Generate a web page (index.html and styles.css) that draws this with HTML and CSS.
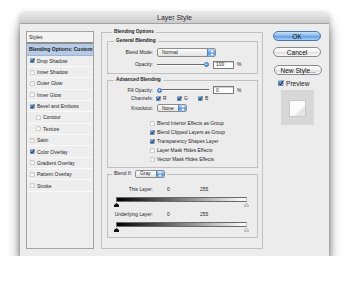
FILE: index.html
```html
<!DOCTYPE html>
<html>
<head>
<meta charset="utf-8">
<title>Layer Style</title>
<link rel="stylesheet" href="styles.css">
</head>
<body>
<div class="window">
  <div class="titlebar">Layer Style</div>
  <div class="content">
    <div class="styles">
      <div class="styles-head">Styles</div>
      <div class="row sel">Blending Options: Custom</div>
      <div class="row"><svg class="cb" viewBox="0 0 10 10"><rect x=".5" y="1.5" width="8" height="8" rx="1" fill="#6ea3e0" stroke="#335f95"/><path d="M2 5.5 4 8 9 1" fill="none" stroke="#111" stroke-width="1.6"/></svg><span>Drop Shadow</span></div>
      <div class="row"><svg class="cb" viewBox="0 0 10 10"><rect x=".5" y="1.5" width="8" height="8" rx="1" fill="#fff" stroke="#8c8c8c"/></svg><span>Inner Shadow</span></div>
      <div class="row"><svg class="cb" viewBox="0 0 10 10"><rect x=".5" y="1.5" width="8" height="8" rx="1" fill="#fff" stroke="#8c8c8c"/></svg><span>Outer Glow</span></div>
      <div class="row"><svg class="cb" viewBox="0 0 10 10"><rect x=".5" y="1.5" width="8" height="8" rx="1" fill="#fff" stroke="#8c8c8c"/></svg><span>Inner Glow</span></div>
      <div class="row"><svg class="cb" viewBox="0 0 10 10"><rect x=".5" y="1.5" width="8" height="8" rx="1" fill="#6ea3e0" stroke="#335f95"/><path d="M2 5.5 4 8 9 1" fill="none" stroke="#111" stroke-width="1.6"/></svg><span>Bevel and Emboss</span></div>
      <div class="row sub"><svg class="cb" viewBox="0 0 10 10"><rect x=".5" y="1.5" width="8" height="8" rx="1" fill="#fff" stroke="#8c8c8c"/></svg><span>Contour</span></div>
      <div class="row sub"><svg class="cb" viewBox="0 0 10 10"><rect x=".5" y="1.5" width="8" height="8" rx="1" fill="#fff" stroke="#8c8c8c"/></svg><span>Texture</span></div>
      <div class="row"><svg class="cb" viewBox="0 0 10 10"><rect x=".5" y="1.5" width="8" height="8" rx="1" fill="#fff" stroke="#8c8c8c"/></svg><span>Satin</span></div>
      <div class="row"><svg class="cb" viewBox="0 0 10 10"><rect x=".5" y="1.5" width="8" height="8" rx="1" fill="#6ea3e0" stroke="#335f95"/><path d="M2 5.5 4 8 9 1" fill="none" stroke="#111" stroke-width="1.6"/></svg><span>Color Overlay</span></div>
      <div class="row"><svg class="cb" viewBox="0 0 10 10"><rect x=".5" y="1.5" width="8" height="8" rx="1" fill="#fff" stroke="#8c8c8c"/></svg><span>Gradient Overlay</span></div>
      <div class="row"><svg class="cb" viewBox="0 0 10 10"><rect x=".5" y="1.5" width="8" height="8" rx="1" fill="#fff" stroke="#8c8c8c"/></svg><span>Pattern Overlay</span></div>
      <div class="row"><svg class="cb" viewBox="0 0 10 10"><rect x=".5" y="1.5" width="8" height="8" rx="1" fill="#fff" stroke="#8c8c8c"/></svg><span>Stroke</span></div>
    </div>

    <fieldset class="grp outer">
      <legend class="lg-outer">Blending Options</legend>

      <fieldset class="grp general">
        <legend class="lg-inner">General Blending</legend>
        <div class="frow">
          <span class="lbl">Blend Mode:</span>
          <div class="popup w-mode"><span class="ptxt">Normal</span><span class="cap"><svg viewBox="0 0 4 6"><path d="M2 0 3.6 2.2H.4Z M2 6 3.6 3.8H.4Z" fill="#fff"/></svg></span></div>
        </div>
        <div class="frow gap3">
          <span class="lbl">Opacity:</span>
          <div class="slider"><span class="track"></span><span class="knob"></span></div>
          <span class="num">100</span><span class="pct">%</span>
        </div>
      </fieldset>

      <fieldset class="grp adv">
        <legend class="lg-inner">Advanced Blending</legend>
        <div class="frow h8">
          <span class="lbl">Fill Opacity:</span>
          <div class="slider"><span class="knob"></span><span class="track"></span></div>
          <span class="num">0</span><span class="pct">%</span>
        </div>
        <div class="frow h8">
          <span class="lbl short">Channels:</span>
          <span class="ch"><svg class="cb" viewBox="0 0 10 10"><rect x=".5" y="1.5" width="8" height="8" rx="1" fill="#6ea3e0" stroke="#335f95"/><path d="M2 5.5 4 8 9 1" fill="none" stroke="#111" stroke-width="1.6"/></svg><span>R</span></span>
          <span class="ch"><svg class="cb" viewBox="0 0 10 10"><rect x=".5" y="1.5" width="8" height="8" rx="1" fill="#6ea3e0" stroke="#335f95"/><path d="M2 5.5 4 8 9 1" fill="none" stroke="#111" stroke-width="1.6"/></svg><span>G</span></span>
          <span class="ch"><svg class="cb" viewBox="0 0 10 10"><rect x=".5" y="1.5" width="8" height="8" rx="1" fill="#6ea3e0" stroke="#335f95"/><path d="M2 5.5 4 8 9 1" fill="none" stroke="#111" stroke-width="1.6"/></svg><span>B</span></span>
        </div>
        <div class="frow h8 mt2">
          <span class="lbl">Knockout:</span>
          <div class="popup w-none"><span class="ptxt">None</span><span class="cap"><svg viewBox="0 0 4 6"><path d="M2 0 3.6 2.2H.4Z M2 6 3.6 3.8H.4Z" fill="#fff"/></svg></span></div>
        </div>
        <div class="checks">
          <div class="chk"><svg class="cb" viewBox="0 0 10 10"><rect x=".5" y="1.5" width="8" height="8" rx="1" fill="#fff" stroke="#8c8c8c"/></svg><span>Blend Interior Effects as Group</span></div>
          <div class="chk"><svg class="cb" viewBox="0 0 10 10"><rect x=".5" y="1.5" width="8" height="8" rx="1" fill="#6ea3e0" stroke="#335f95"/><path d="M2 5.5 4 8 9 1" fill="none" stroke="#111" stroke-width="1.6"/></svg><span>Blend Clipped Layers as Group</span></div>
          <div class="chk"><svg class="cb" viewBox="0 0 10 10"><rect x=".5" y="1.5" width="8" height="8" rx="1" fill="#6ea3e0" stroke="#335f95"/><path d="M2 5.5 4 8 9 1" fill="none" stroke="#111" stroke-width="1.6"/></svg><span>Transparency Shapes Layer</span></div>
          <div class="chk"><svg class="cb" viewBox="0 0 10 10"><rect x=".5" y="1.5" width="8" height="8" rx="1" fill="#fff" stroke="#8c8c8c"/></svg><span>Layer Mask Hides Effects</span></div>
          <div class="chk"><svg class="cb" viewBox="0 0 10 10"><rect x=".5" y="1.5" width="8" height="8" rx="1" fill="#fff" stroke="#8c8c8c"/></svg><span>Vector Mask Hides Effects</span></div>
        </div>
      </fieldset>

      <fieldset class="grp blendif">
        <legend class="lg-bi"><span>Blend If:</span>
          <span class="popup w-gray"><span class="ptxt">Gray</span><span class="cap"><svg viewBox="0 0 4 6"><path d="M2 0 3.6 2.2H.4Z M2 6 3.6 3.8H.4Z" fill="#fff"/></svg></span></span>
        </legend>
        <div class="bi-row"><span class="lbl">This Layer:</span><span class="v0">0</span><span>255</span></div>
        <div class="bar"></div>
        <div class="marks">
          <svg viewBox="0 0 5 4"><path d="M2.5 0 5 2V4H0V2Z" fill="#111"/></svg>
          <svg viewBox="0 0 5 4"><path d="M2.5.4 4.6 2.1V3.6H.4V2.1Z" fill="#d6d6d6" stroke="#9a9a9a" stroke-width=".6"/></svg>
        </div>
        <div class="bi-row mt3"><span class="lbl">Underlying Layer:</span><span class="v0">0</span><span>255</span></div>
        <div class="bar"></div>
        <div class="marks">
          <svg viewBox="0 0 5 4"><path d="M2.5 0 5 2V4H0V2Z" fill="#111"/></svg>
          <svg viewBox="0 0 5 4"><path d="M2.5.4 4.6 2.1V3.6H.4V2.1Z" fill="#d6d6d6" stroke="#9a9a9a" stroke-width=".6"/></svg>
        </div>
      </fieldset>
    </fieldset>

    <div class="buttons">
      <div class="btn ok">OK</div>
      <div class="btn cancel">Cancel</div>
      <div class="btn newstyle">New Style...</div>
      <div class="prev"><svg class="cb big" viewBox="0 0 10 10"><rect x=".5" y="1.5" width="8" height="8" rx="1" fill="#6ea3e0" stroke="#335f95"/><path d="M2 5.5 4 8 9 1" fill="none" stroke="#111" stroke-width="1.6"/></svg><span>Preview</span></div>
      <div class="thumb">
        <svg viewBox="0 0 33 35" width="33" height="35">
          <rect width="33" height="35" fill="#d7d7d7"/>
          <rect x="8.5" y="10.5" width="16" height="16" fill="#e2e2e2" stroke="#c8c8c8"/>
          <path d="M9 11H24V15.5L13.5 26H9Z" fill="#fbfbfb"/>
          <path d="M24 15.5 13.5 26H24Z" fill="#e6e6e6"/>
        </svg>
      </div>
    </div>
  </div>
</div>
</body>
</html>
```

FILE: styles.css
```css
* { box-sizing: border-box; }
html, body { margin: 0; padding: 0; background: #fff; }
body { font-family: "Liberation Sans", Arial, sans-serif; color: #1c1c1c; }

.window {
  margin: 13px 0 0 20px;
  width: 309px;
  height: 243px;
  background: #ececec;
  border-radius: 4px 4px 0 0;
  box-shadow: 0 12px 14px -2px rgba(0,0,0,.65), 0 1px 6px rgba(0,0,0,.3);
  display: flex;
  flex-direction: column;
}
.titlebar {
  height: 11px;
  line-height: 10px;
  text-align: center;
  font-size: 7px;
  color: #2a2a2a;
  background: linear-gradient(#e9e9e9, #cbcbcb);
  border-bottom: 1px solid #a2a2a2;
  border-radius: 4px 4px 0 0;
}
.content {
  display: flex;
  align-items: flex-start;
  padding: 7px 6px 0 6px;
}

/* styles list */
.styles {
  width: 68px;
  height: 218px;
  border: 1px solid #a3a3a3;
  background: #eeeeee;
  font-size: 5px;
  flex: none;
}
.styles-head {
  height: 12px;
  line-height: 10px;
  padding-left: 2px;
  background: #f3f3f3;
  border-bottom: 2px solid #8e8e8e;
}
.row {
  height: 11.36px;
  display: flex;
  align-items: center;
  gap: 2px;
  padding-left: 3px;
  border-bottom: 1px solid #f9f9f9;
}
.row.sub { padding-left: 9px; }
.row.sel {
  height: 11.5px;
  padding-left: 2px;
  background: #b5cbe7;
  font-weight: bold;
  border-bottom: 1px solid #9fb6d2;
}
.cb { width: 5px; height: 5px; flex: none; }
.cb.big { width: 6px; height: 6px; }

/* group boxes */
fieldset.grp {
  margin: 0;
  padding: 0;
  border: 1px solid #c1c1c1;
  min-width: 0;
}
legend {
  font-weight: bold;
  font-size: 4.8px;
  line-height: 6px;
  padding: 0 2px;
}
.lg-outer { margin-left: 5px; }
.lg-inner { margin-left: 6px; }
.outer {
  width: 162px;
  flex: none;
  margin: -2px 0 0 7px !important;
  padding: 3px 4px 10px 5px !important;
}
.general { padding: 4px 0 4px 0 !important; }
.adv { margin-top: 3px !important; padding: 3px 0 3.5px 0 !important; }
.blendif { margin-top: 2px !important; padding: 7px 0 5px 0 !important; }

.frow {
  display: flex;
  align-items: center;
  height: 9px;
  font-size: 4.9px;
}
.frow.gap3 { margin-top: 3px; }
.frow.h8 { height: 8px; }
.mt2 { margin-top: 2px; }
.mt3 { margin-top: 3px; }
.lbl {
  width: 45px;
  flex: none;
  text-align: right;
  margin-right: 4px;
}
.lbl.short { margin-right: 3px; }

.popup {
  display: flex;
  align-items: stretch;
  height: 9px;
  border: 1px solid #8d8d8d;
  border-radius: 2px;
  background: linear-gradient(#fdfdfd, #e2e2e2);
  font-size: 4.9px;
  font-weight: normal;
}
.ptxt { flex: 1; display: flex; align-items: center; padding-left: 4px; }
.cap {
  width: 8px;
  display: flex;
  align-items: center;
  justify-content: center;
  background: linear-gradient(#b8d5f5, #6ea8e7 50%, #4a8ddb 51%, #93c2f2);
  border-left: 1px solid #5d84b0;
  border-radius: 0 1.5px 1.5px 0;
}
.cap svg { width: 4px; height: 6px; }
.w-mode { width: 59px; }
.w-none { width: 30px; height: 8px; }
.w-gray { width: 30px; height: 8px; margin-left: 3px; }

.slider { width: 52px; display: flex; align-items: center; flex: none; }
.track {
  flex: 1;
  height: 2px;
  border-top: 1px solid #6b6b6b;
  border-bottom: 1px solid #fbfbfb;
}
.knob {
  width: 5px;
  height: 5px;
  flex: none;
  border-radius: 50%;
  background: radial-gradient(circle at 40% 35%, #dcefff, #4a90e0 70%);
  border: .5px solid #3b6fae;
}
.num {
  width: 21px;
  height: 8px;
  margin-left: 4px;
  padding-left: 2px;
  display: flex;
  align-items: center;
  background: #fff;
  border: 1px solid #7d7d7d;
  box-shadow: inset 0 1px 0 #cfcfcf;
}
.pct { margin-left: 3px; }

.ch { display: flex; align-items: center; gap: 2px; width: 21px; flex: none; }

.checks { margin-top: 6.5px; font-size: 4.9px; }
.chk {
  height: 9px;
  display: flex;
  align-items: center;
  gap: 2px;
  padding-left: 42px;
}

.lg-bi {
  display: flex;
  align-items: center;
  height: 8px;
  margin-left: 4px;
  padding: 0 2px;
  font-weight: normal;
  font-size: 4.9px;
}
.bi-row {
  display: flex;
  align-items: center;
  height: 8px;
  font-size: 4.9px;
}
.v0 { margin-left: 10px; width: 33px; }
.bar {
  margin: 4px 0 0 8px;
  width: 131px;
  height: 5px;
  background: linear-gradient(90deg, #000, #fff);
  border: 1px solid #6a6a6a;
  border-right-color: #c0c0c0;
}
.marks {
  margin-left: 6px;
  width: 135px;
  height: 5px;
  display: flex;
  justify-content: space-between;
  align-items: center;
}
.marks svg { width: 5px; height: 4px; }

/* buttons */
.buttons {
  width: 50px;
  margin-left: 10px;
  flex: none;
  display: flex;
  flex-direction: column;
  align-items: flex-start;
}
.btn {
  width: 48px;
  height: 10px;
  border-radius: 5px;
  font-size: 6.6px;
  display: flex;
  align-items: center;
  justify-content: center;
  color: #111;
}
.ok {
  background: linear-gradient(#c9dff6, #86b7ec 50%, #5f9ce1 51%, #a6cff6);
  border: 1px solid #4a77aa;
}
.cancel, .newstyle {
  background: linear-gradient(#ffffff, #f1f1f1 50%, #e0e0e0 51%, #f7f7f7);
  border: 1px solid #8a8a8a;
}
.cancel { margin-top: 6px; }
.newstyle { margin-top: 8px; margin-left: 1px; }
.prev {
  margin: 4px 0 0 5px;
  height: 8px;
  display: flex;
  align-items: center;
  gap: 2px;
  font-size: 6.6px;
}
.thumb { margin: 3px 0 0 8px; width: 33px; height: 35px; }
.thumb svg { display: block; }
```
